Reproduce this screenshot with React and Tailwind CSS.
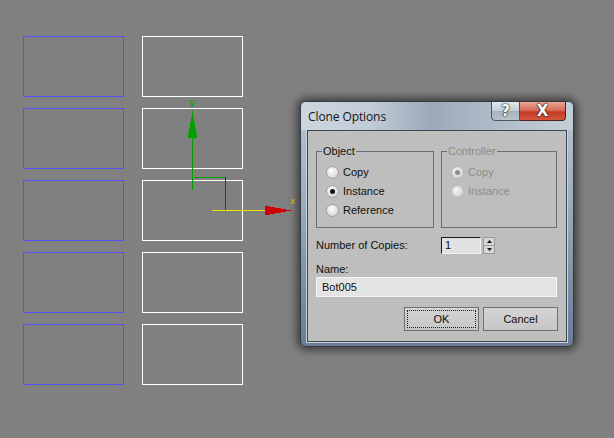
import React from "react";

function Radio({ label, checked, disabled }) {
  return (
    <div className="flex items-center h-[19px]">
      <div
        className={
          "w-[13px] h-[13px] rounded-full flex items-center justify-center border " +
          (disabled
            ? "border-[#b8b8b8] bg-[radial-gradient(circle_at_40%_35%,#f4f4f4_0%,#d6d6d6_70%,#c4c4c4_100%)]"
            : "border-[#a0a0a0] bg-[radial-gradient(circle_at_40%_35%,#ffffff_0%,#dcdcdc_65%,#bcbcbc_100%)]")
        }
      >
        {checked && (
          <div
            className={
              "w-[5px] h-[5px] rounded-full " +
              (disabled ? "bg-[#8a8a8a]" : "bg-[#111111]")
            }
          />
        )}
      </div>
      <span
        className={
          "ml-[4px] text-[11px] leading-[13px] " +
          (disabled ? "text-[#8c8c8c]" : "text-[#101010]")
        }
      >
        {label}
      </span>
    </div>
  );
}

function Group({ title, disabled, className, children }) {
  return (
    <div
      className={
        "relative border border-[#6e6e6e] h-[77px] pt-[11px] pl-[9px] " +
        className
      }
    >
      <span
        className={
          "absolute left-[5px] -top-[8px] px-[1px] bg-[#bebebe] text-[11px] leading-[14px] " +
          (disabled ? "text-[#8c8c8c]" : "text-[#101010]")
        }
      >
        {title}
      </span>
      {children}
    </div>
  );
}

function Gizmo() {
  return (
    <svg
      className="absolute left-0 top-0 pointer-events-none"
      width="614"
      height="438"
      viewBox="0 0 614 438"
    >
      <text x="189" y="106" fill="#00a000" fontSize="10" fontFamily="DejaVu Sans Mono, monospace">
        y
      </text>
      <line x1="192.5" y1="111" x2="192.5" y2="190" stroke="#00a000" strokeWidth="1" shapeRendering="crispEdges" />
      <polygon points="192.5,112 197.5,138 187.5,138" fill="#00a000" shapeRendering="crispEdges" />
      <line x1="192" y1="177.5" x2="226" y2="177.5" stroke="#00a000" strokeWidth="1" shapeRendering="crispEdges" />
      <line x1="225.5" y1="177" x2="225.5" y2="210" stroke="#c00000" strokeWidth="1" shapeRendering="crispEdges" />
      <line x1="212" y1="210.5" x2="266" y2="210.5" stroke="#f0e000" strokeWidth="1" shapeRendering="crispEdges" />
      <polygon points="265,205.5 291,210.5 265,215.5" fill="#d00000" shapeRendering="crispEdges" />
      <text x="290" y="204" fill="#e0d000" fontSize="9" fontFamily="DejaVu Sans Mono, monospace">
        x
      </text>
    </svg>
  );
}

export default function App() {
  const rows = [0, 1, 2, 3, 4];
  return (
    <div className="relative w-[614px] h-[438px] bg-[#808080] overflow-hidden font-['Liberation_Sans',Arial,sans-serif]">
      <div className="grid grid-cols-[101px_101px] gap-x-[18px] gap-y-[11px] pl-[23px] pt-[36px]">
        {rows.map((r) => (
          <React.Fragment key={r}>
            <div className="h-[61px] border border-[#5252f2]" />
            <div className="h-[61px] border border-white" />
          </React.Fragment>
        ))}
      </div>

      <Gizmo />

      {/* Dialog window */}
      <div className="absolute left-[300px] top-[101px] w-[274px] h-[246px] rounded-[6px] border border-[#343a42] shadow-[0_0_9px_3px_rgba(0,0,0,0.55)] bg-[linear-gradient(180deg,#b9c5d1_0%,#9eadbe_40%,#7d8fa5_75%,#6a7d95_100%)] overflow-hidden flex flex-col">
        {/* title bar */}
        <div className="relative h-[28px] shrink-0 bg-[linear-gradient(90deg,#cdd6df_0%,#c2ccd7_25%,#9aa9b9_48%,#aebbc8_70%,#c4ced9_100%)] flex items-start">
          <span className="ml-[7px] mt-[7px] text-[12px] leading-[16px] text-[#151515] font-['Open_Sans',sans-serif] tracking-[-0.1px]">
            Clone Options
          </span>
          <div className="absolute right-[7px] top-[-1px] flex">
            <div className="w-[29px] h-[20px] rounded-bl-[4px] border border-[#4b5560] bg-[linear-gradient(180deg,#e3e8ee_0%,#c3ccd6_48%,#a7b3c1_52%,#b9c3ce_100%)] flex items-center justify-center">
              <span className="text-white font-black text-[15px] leading-[15px] font-['DejaVu_Sans',sans-serif] [text-shadow:0_0_1px_#1f2730,0_0_1px_#1f2730,0_0_2px_#2b3440]">
                ?
              </span>
            </div>
            <div className="w-[46px] h-[20px] rounded-br-[4px] border border-l-0 border-[#4a2520] bg-[linear-gradient(180deg,#eba596_0%,#d9705e_45%,#c33b22_55%,#d2583e_100%)] flex items-center justify-center">
              <span className="text-white font-black text-[15px] leading-[15px] font-['DejaVu_Sans',sans-serif] [text-shadow:0_0_1px_#2a0d08,0_0_1px_#2a0d08,0_0_2px_#3a1510]">
                X
              </span>
            </div>
          </div>
        </div>

        {/* client panel */}
        <div className="mx-[6px] h-[212px] border border-[#3f4853] bg-[#bebebe] shadow-[0_0_0_1px_#c9d2dc] px-[8px] pt-[20px] flex flex-col">
          <div className="flex gap-[7px]">
            <Group title="Object" className="w-[118px]">
              <Radio label="Copy" />
              <Radio label="Instance" checked />
              <Radio label="Reference" />
            </Group>
            <Group title="Controller" disabled className="w-[116px]">
              <Radio label="Copy" checked disabled />
              <Radio label="Instance" disabled />
            </Group>
          </div>

          <div className="mt-[9px] h-[17px] flex items-center">
            <span className="w-[125px] text-[11px] leading-[13px] text-[#101010]">
              Number of Copies:
            </span>
            <div className="w-[40px] h-[17px] border-t border-l border-[#1a1a1a] border-r border-b border-r-[#f2f2f2] border-b-[#f2f2f2] bg-[#e2e2e2] pl-[3px] flex items-center text-[11px] leading-[13px] text-[#101010]">
              1
            </div>
            <div className="ml-[2px] w-[12px] h-[17px] flex flex-col border border-[#9a9a9a]">
              <div className="flex-1 bg-[#d6d6d6] border-b border-[#9a9a9a] flex items-center justify-center">
                <svg width="5" height="3" viewBox="0 0 5 3">
                  <polygon points="2.5,0 5,3 0,3" fill="#111" />
                </svg>
              </div>
              <div className="flex-1 bg-[#d6d6d6] flex items-center justify-center">
                <svg width="5" height="3" viewBox="0 0 5 3">
                  <polygon points="0,0 5,0 2.5,3" fill="#111" />
                </svg>
              </div>
            </div>
          </div>

          <span className="mt-[8px] text-[11px] leading-[14px] text-[#101010]">Name:</span>
          <div className="mt-[1px] h-[20px] w-[241px] border border-[#f4f4f4] bg-[#e4e4e4] pl-[5px] flex items-center text-[11px] leading-[13px] text-[#101010]">
            Bot005
          </div>

          <div className="mt-[10px] flex justify-end gap-[4px]">
            <div className="w-[75px] h-[24px] border border-[#707070] bg-[linear-gradient(180deg,#d4d4d4_0%,#c6c6c6_100%)] p-[2px]">
              <div className="w-full h-full border border-dotted border-[#202020] flex items-center justify-center text-[11px] leading-[13px] text-[#101010]">
                OK
              </div>
            </div>
            <div className="w-[75px] h-[24px] border border-[#707070] bg-[linear-gradient(180deg,#d4d4d4_0%,#c6c6c6_100%)] flex items-center justify-center text-[11px] leading-[13px] text-[#101010]">
              Cancel
            </div>
          </div>
        </div>
      </div>
    </div>
  );
}
